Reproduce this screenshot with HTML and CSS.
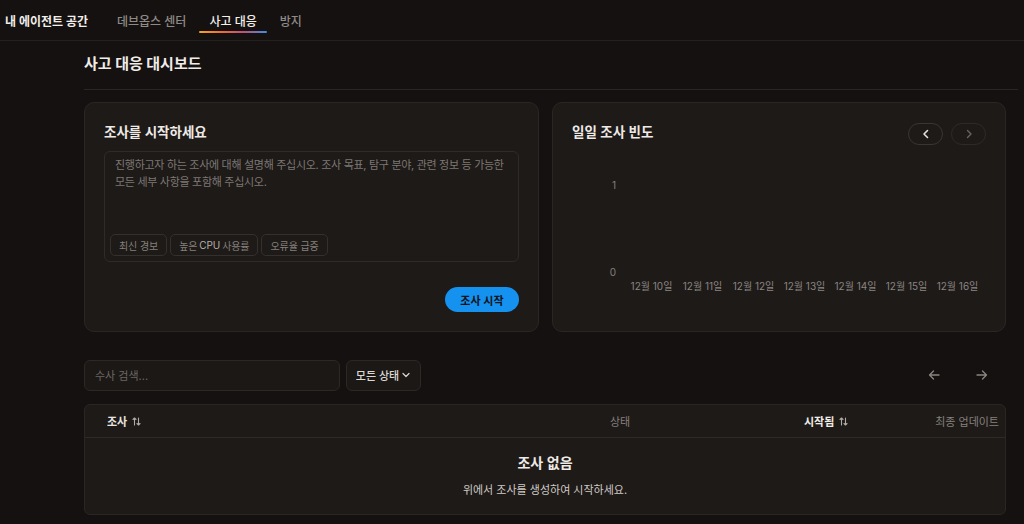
FILE: index.html
```html
<!DOCTYPE html>
<html lang="ko">
<head>
<meta charset="utf-8">
<title>사고 대응 대시보드</title>
<link rel="stylesheet" href="styles.css">
</head>
<body>
<header class="topbar">
  <div class="brand">내 에이전트 공간</div>
  <nav class="nav">
    <a class="nav-item">데브옵스 센터</a>
    <a class="nav-item active">사고 대응</a>
    <a class="nav-item">방지</a>
  </nav>
</header>

<main class="main">
  <h1 class="page-title">사고 대응 대시보드</h1>
  <div class="content">
    <section class="cards">
      <div class="card start-card">
        <h2 class="card-title">조사를 시작하세요</h2>
        <div class="prompt-box">
          <p class="placeholder">진행하고자 하는 조사에 대해 설명해 주십시오. 조사 목표, 탐구 분야, 관련 정보 등 가능한 모든 세부 사항을 포함해 주십시오.</p>
          <div class="chips">
            <span class="chip">최신 경보</span>
            <span class="chip">높은 <span class="chip-latin">CPU</span> 사용률</span>
            <span class="chip">오류율 급증</span>
          </div>
        </div>
        <button class="primary-btn">조사 시작</button>
      </div>

      <div class="card chart-card">
        <div class="chart-head">
          <h2 class="card-title">일일 조사 빈도</h2>
          <div class="pager">
            <button class="pill-btn">
              <svg width="8" height="10" viewBox="0 0 8 10"><path d="M5.5 1.5 2 5l3.5 3.5" fill="none" stroke="currentColor" stroke-width="1.6" stroke-linecap="round" stroke-linejoin="round"/></svg>
            </button>
            <button class="pill-btn dim">
              <svg width="8" height="10" viewBox="0 0 8 10"><path d="M2.5 1.5 6 5 2.5 8.5" fill="none" stroke="currentColor" stroke-width="1.4" stroke-linecap="round" stroke-linejoin="round"/></svg>
            </button>
          </div>
        </div>
        <div class="chart">
          <div class="y-axis"><span>1</span><span>0</span></div>
          <div class="plot"></div>
          <div class="y-spacer"></div>
          <div class="x-axis">
            <span>12월 10일</span><span>12월 11일</span><span>12월 12일</span><span>12월 13일</span><span>12월 14일</span><span>12월 15일</span><span>12월 16일</span>
          </div>
        </div>
      </div>
    </section>

    <section class="toolbar">
      <div class="search">수사 검색...</div>
      <div class="select">모든 상태
        <svg width="10" height="10" viewBox="0 0 10 10"><path d="M2 3.5 5 6.5 8 3.5" fill="none" stroke="currentColor" stroke-width="1.2" stroke-linecap="round" stroke-linejoin="round"/></svg>
      </div>
      <div class="arrows">
        <button class="arrow-btn">
          <svg width="14" height="14" viewBox="0 0 14 14"><path d="M12 7H2.5M6.5 3 2.5 7l4 4" fill="none" stroke="currentColor" stroke-width="1.3" stroke-linecap="round" stroke-linejoin="round"/></svg>
        </button>
        <button class="arrow-btn">
          <svg width="14" height="14" viewBox="0 0 14 14"><path d="M2 7h9.5M7.5 3l4 4-4 4" fill="none" stroke="currentColor" stroke-width="1.3" stroke-linecap="round" stroke-linejoin="round"/></svg>
        </button>
      </div>
    </section>

    <section class="table">
      <div class="thead">
        <div class="th th-name">조사
          <svg class="sort" width="9" height="9" viewBox="0 0 9 9"><path d="M2.5 8V1M1 2.5 2.5 1 4 2.5M6.5 1v7M5 6.5 6.5 8 8 6.5" fill="none" stroke="currentColor" stroke-width="1.1" stroke-linecap="round" stroke-linejoin="round"/></svg>
        </div>
        <div class="th th-status">상태</div>
        <div class="th th-started">시작됨
          <svg class="sort" width="9" height="9" viewBox="0 0 9 9"><path d="M2.5 8V1M1 2.5 2.5 1 4 2.5M6.5 1v7M5 6.5 6.5 8 8 6.5" fill="none" stroke="currentColor" stroke-width="1.1" stroke-linecap="round" stroke-linejoin="round"/></svg>
        </div>
        <div class="th th-updated">최종 업데이트</div>
      </div>
      <div class="empty">
        <div class="empty-title">조사 없음</div>
        <div class="empty-sub">위에서 조사를 생성하여 시작하세요.</div>
      </div>
    </section>
  </div>
</main>
</body>
</html>
```

FILE: styles.css
```css
* { box-sizing: border-box; }

html, body {
  margin: 0;
  padding: 0;
  background: #141110;
  color: #ece8e4;
  font-family: Inter, "Noto Sans CJK KR", "Noto Sans", sans-serif;
}

button {
  font-family: inherit;
  cursor: pointer;
}

.topbar {
  height: 41px;
  display: flex;
  align-items: center;
  border-bottom: 1px solid #25211f;
  padding-left: 5px;
}

.brand {
  font-size: 12px;
  font-weight: 700;
  color: #f2eeea;
}

.nav {
  display: flex;
  margin-left: 19px;
  gap: 3px;
  height: 100%;
}

.nav-item {
  position: relative;
  display: flex;
  align-items: center;
  padding: 0 10px;
  font-size: 12px;
  font-weight: 500;
  color: #8f8a86;
}

.nav-item.active {
  color: #f4f0ec;
}

.nav-item.active::after {
  content: "";
  position: absolute;
  left: 0;
  right: 0;
  bottom: 7px;
  height: 2px;
  border-radius: 1px;
  background: linear-gradient(90deg, #f5a524 0%, #ef6a3a 35%, #c0507a 65%, #3f8ee8 100%);
}

.main {
  padding: 11px 6px 0 84px;
}

.page-title {
  margin: 0;
  font-size: 15px;
  line-height: 24px;
  font-weight: 700;
  color: #f0ece8;
  padding-bottom: 13px;
  border-bottom: 1px solid #2a2624;
}

.content {
  width: 922px;
}

.cards {
  display: grid;
  grid-template-columns: 455px 454px;
  gap: 13px;
  margin-top: 12px;
}

.card {
  height: 230px;
  background: #1e1a18;
  border: 1px solid #2a2624;
  border-radius: 10px;
  padding: 19px;
}

.card-title {
  margin: 0;
  font-size: 13.5px;
  line-height: 20px;
  font-weight: 600;
  color: #eeeae6;
}

.start-card {
  display: flex;
  flex-direction: column;
}

.prompt-box {
  margin-top: 9px;
  height: 111px;
  border: 1px solid #302b29;
  border-radius: 6px;
  padding: 5px;
  display: flex;
  flex-direction: column;
}

.placeholder {
  margin: 0;
  padding: 0 0 0 5px;
  font-size: 11px;
  line-height: 17px;
  letter-spacing: -0.3px;
  color: #7d7874;
}

.chips {
  margin-top: auto;
  display: flex;
  gap: 3px;
}

.chip {
  height: 22px;
  display: flex;
  align-items: center;
  padding: 0 8px;
  font-size: 10px;
  letter-spacing: -0.1px;
  color: #85807c;
  border: 1px solid #34302d;
  border-radius: 5px;
}

.chip-latin {
  color: #b5b0ab;
  margin: 0 2px;
}

.primary-btn {
  margin-top: auto;
  align-self: flex-end;
  width: 74px;
  height: 25px;
  border: none;
  border-radius: 13px;
  background: #1591f0;
  color: #10141a;
  font-size: 11px;
  font-weight: 600;
}

.chart-head {
  display: flex;
  align-items: flex-start;
  justify-content: space-between;
}

.pager {
  display: flex;
  gap: 8px;
  margin-top: 1px;
}

.pill-btn {
  width: 35px;
  height: 22px;
  border-radius: 11px;
  border: 1.5px solid #3a3532;
  background: transparent;
  color: #e4e0dc;
  display: flex;
  align-items: center;
  justify-content: center;
  padding: 0;
}

.pill-btn.dim {
  color: #6a6562;
  border-color: #2e2a28;
}

.chart {
  margin-top: 33px;
  margin-left: 2px;
  display: grid;
  grid-template-columns: 42px 357px;
  grid-template-rows: 101px 14px;
  column-gap: 10px;
}

.y-axis {
  display: flex;
  flex-direction: column;
  justify-content: space-between;
  align-items: flex-end;
  font-size: 10px;
  line-height: 14px;
  color: #85807c;
}

.x-axis {
  display: grid;
  grid-template-columns: repeat(7, 51px);
  font-size: 10px;
  line-height: 14px;
  color: #8a8581;
  text-align: center;
  white-space: nowrap;
}

.toolbar {
  margin-top: 27px;
  display: flex;
  align-items: center;
  gap: 6px;
}

.search {
  width: 256px;
  height: 31px;
  display: flex;
  align-items: center;
  padding: 0 10px;
  font-size: 11px;
  color: #6c6763;
  background: #1b1816;
  border: 1px solid #2c2826;
  border-radius: 6px;
}

.select {
  width: 75px;
  height: 31px;
  display: flex;
  align-items: center;
  justify-content: center;
  gap: 2px;
  font-size: 11px;
  font-weight: 500;
  color: #dcd8d4;
  background: #1b1816;
  border: 1px solid #2c2826;
  border-radius: 6px;
}

.arrows {
  margin-left: auto;
  margin-right: 8px;
  display: flex;
  gap: 16px;
}

.arrow-btn {
  width: 32px;
  height: 32px;
  border: none;
  background: transparent;
  color: #8a8581;
  display: flex;
  align-items: center;
  justify-content: center;
  padding: 0;
}

.table {
  margin-top: 13px;
  background: #1e1a18;
  border: 1px solid #2a2624;
  border-radius: 6px;
}

.thead {
  height: 33px;
  display: grid;
  grid-template-columns: 515px 40px 1fr auto;
  align-items: center;
  border-bottom: 1px solid #2e2a28;
  font-size: 11px;
}

.th {
  display: flex;
  align-items: center;
  gap: 5px;
  color: #85807c;
  white-space: nowrap;
}

.sort {
  color: #b0aba6;
}

.th-name {
  padding-left: 22px;
  color: #e8e4e0;
  font-weight: 600;
}

.th-status {
  justify-content: center;
}

.th-started {
  padding-left: 164px;
  color: #f0ece8;
  font-weight: 700;
}

.th-updated {
  padding-right: 6px;
}

.empty {
  padding: 15px 0 15px;
  text-align: center;
}

.empty-title {
  font-size: 14px;
  line-height: 20px;
  font-weight: 600;
  color: #eeeae6;
}

.empty-sub {
  margin-top: 9px;
  font-size: 11px;
  line-height: 17px;
  color: #cfcac6;
}
```
